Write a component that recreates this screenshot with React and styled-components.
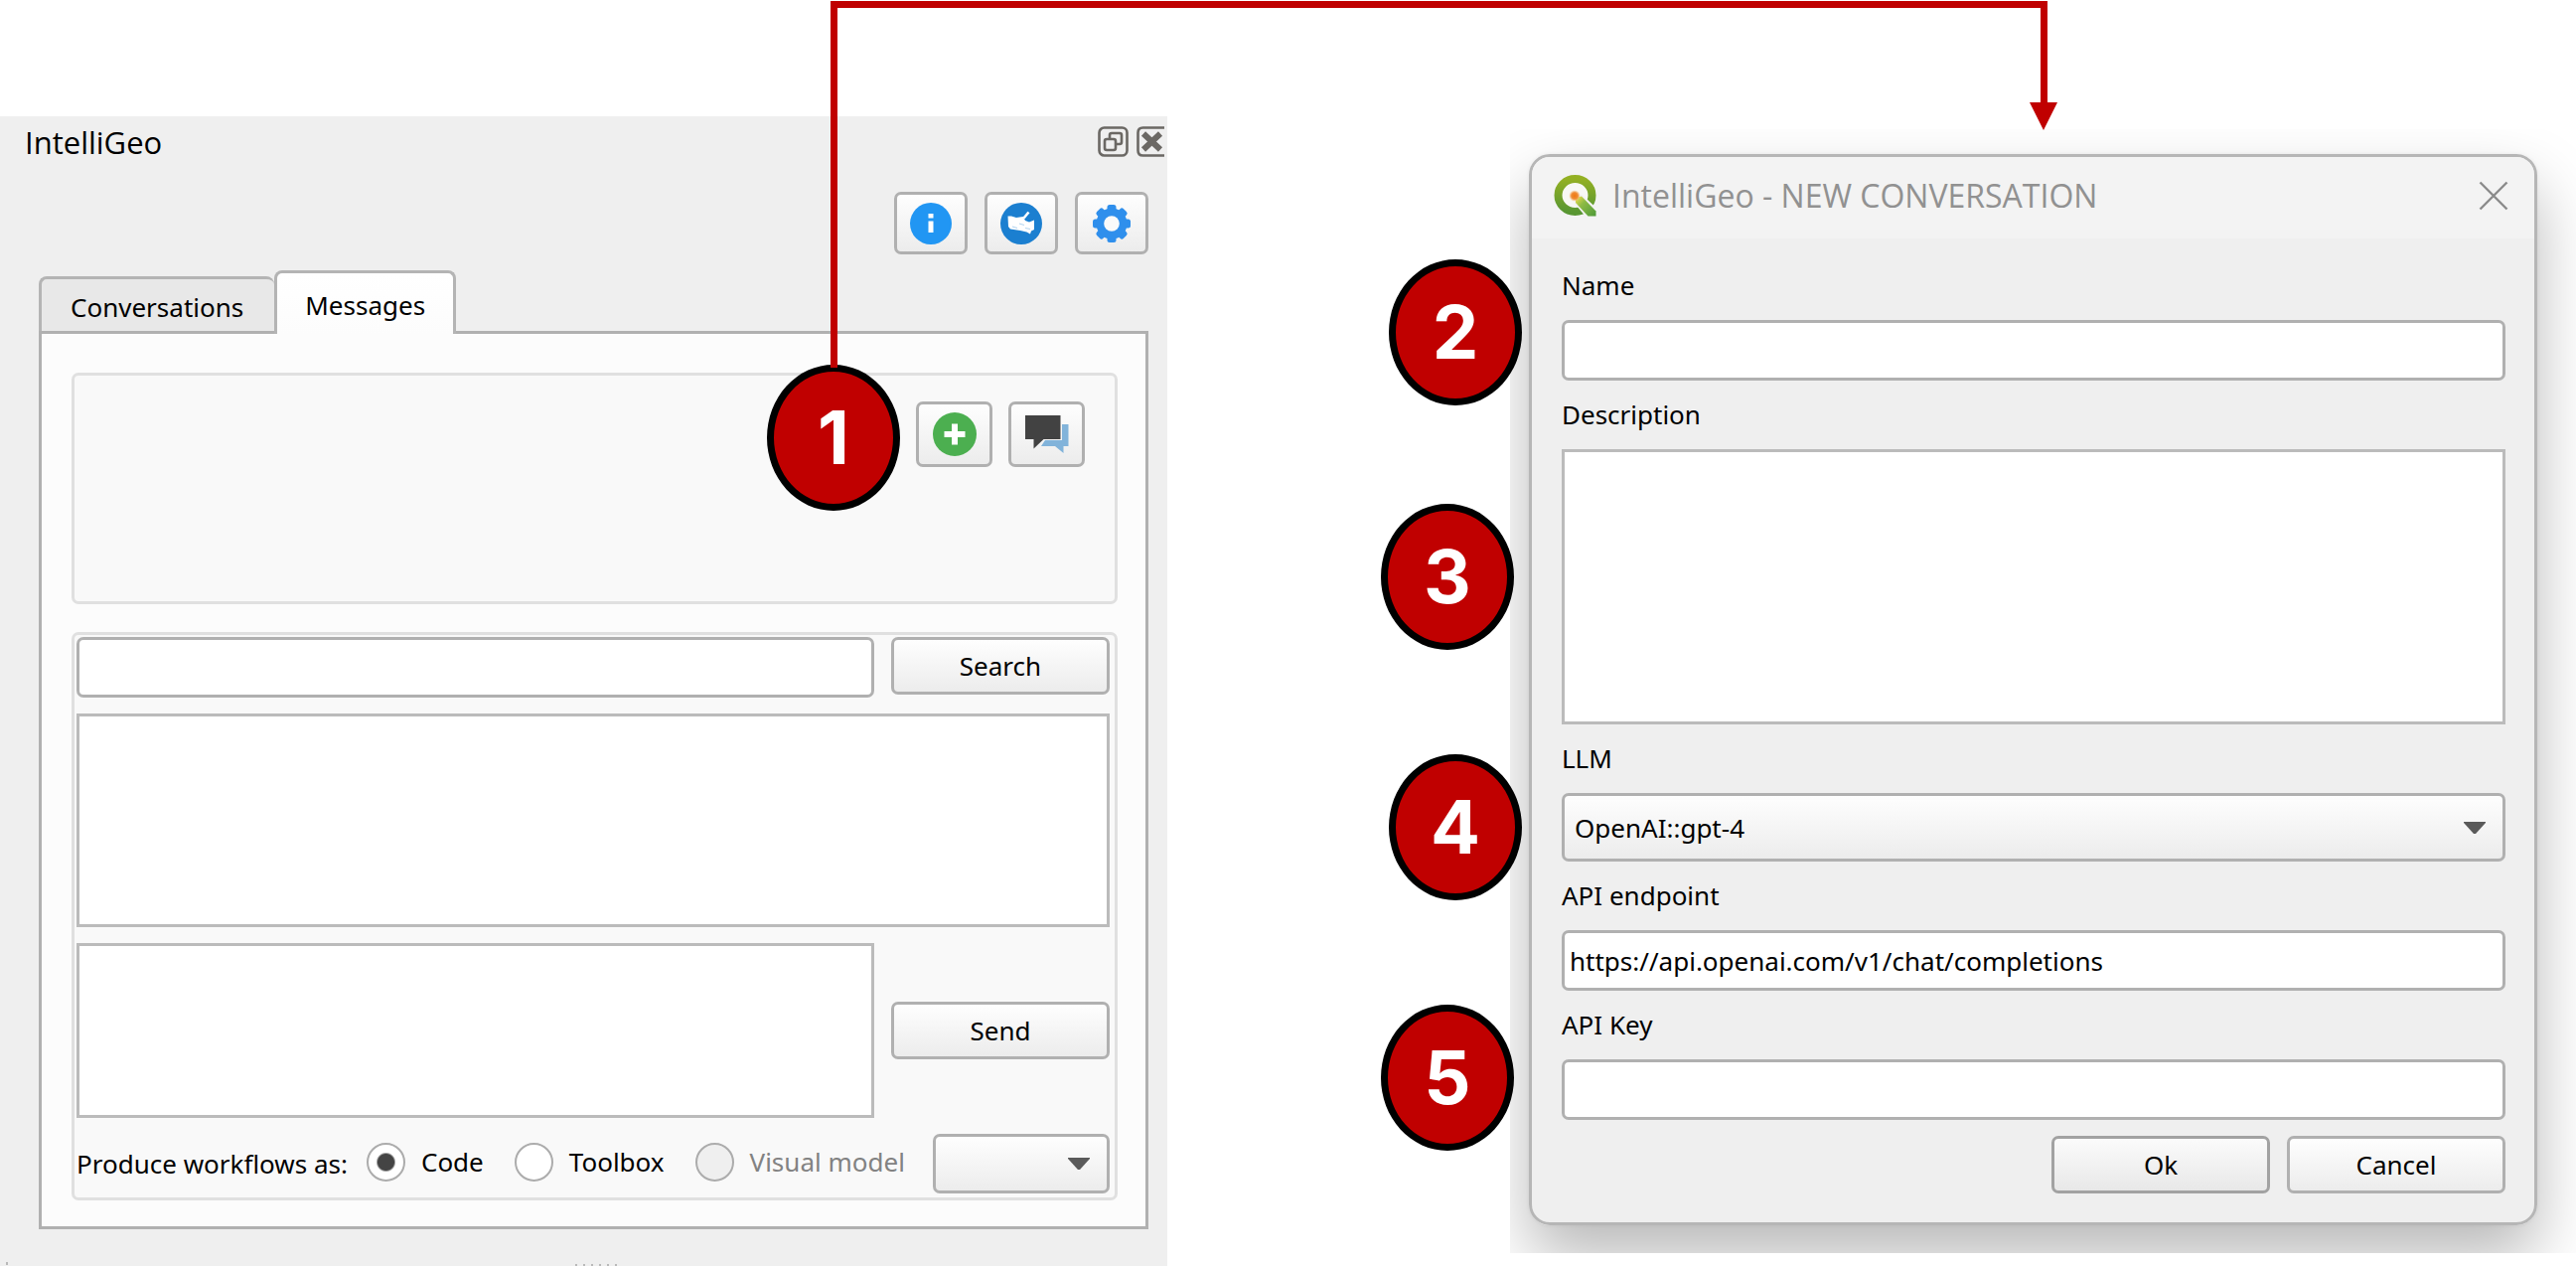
import React from "react";
import styled, { createGlobalStyle, css } from "styled-components";

const GlobalStyle = createGlobalStyle`
  *, *::before, *::after { box-sizing: border-box; }
  body { margin: 0; background: #ffffff; color: #000000; }
  body, button, input, select, textarea {
    font-family: "Noto Sans", "Open Sans", sans-serif;
    font-size: 26px;
  }
`;

const Page = styled.main`
  position: relative;
  display: grid;
  grid-template-columns: minmax(0, 1175fr) minmax(0, 345fr) minmax(0, 1073fr);
  align-items: start;
  min-height: 100vh;
  overflow: hidden;
`;

/* ---------- shared controls ---------- */

const raised = css`
  background: linear-gradient(#fefefe, #ececec);
  border: 3px solid #b0b0b0;
  border-radius: 7px;
  color: #000000;
`;

const PushButton = styled.button`
  ${raised}
  flex: none;
  width: 220px;
  height: 58px;
  padding: 0;
  ${(p) => p.$primary && css`
    background: linear-gradient(#fbfbfb, #e8e8e8);
    border-color: #a2a2a2;
  `}
`;

const IconButton = styled.button`
  ${raised}
  display: grid;
  place-items: center;
  width: ${(p) => (p.$large ? 77 : 74)}px;
  height: ${(p) => (p.$large ? 66 : 63)}px;
  padding: 0;
`;

const TextInput = styled.input`
  flex: 1;
  flex-basis: auto;
  min-width: 0;
  width: 100%;
  height: 61px;
  padding: 0 5px;
  background: #ffffff;
  border: 3px solid #b0b0b0;
  border-radius: 7px;
`;

const TextArea = styled.textarea`
  display: block;
  flex: 1;
  flex-basis: auto;
  min-width: 0;
  width: 100%;
  height: ${(p) => p.$height}px;
  padding: 5px;
  background: #ffffff;
  border: 3px solid #bbbbbb;
  border-radius: 0;
  resize: none;
`;

const SelectBox = styled.span`
  display: grid;
  align-items: center;
  width: ${(p) => p.$width || "100%"};
  > * { grid-area: 1 / 1; }
`;

const Select = styled.select`
  ${raised}
  appearance: none;
  width: 100%;
  height: ${(p) => p.$height}px;
  padding: 0 50px 0 10px;
`;

const SelectArrow = styled.svg`
  justify-self: end;
  margin-right: 20px;
  pointer-events: none;
`;

function DropDown({ height, width, children, ...rest }) {
  return (
    <SelectBox $width={width}>
      <Select $height={height} {...rest}>{children}</Select>
      <SelectArrow width="22" height="12" viewBox="0 0 22 12" aria-hidden="true">
        <path d="M0 0H22V1L12 12H10L0 1Z" fill="#5a5a5a" />
      </SelectArrow>
    </SelectBox>
  );
}

/* ---------- callouts ---------- */

const Callout = styled.span`
  position: absolute;
  z-index: 2;
  top: ${(p) => p.$top}px;
  left: ${(p) => p.$left}px;
  display: grid;
  place-items: center;
  width: 134px;
  height: 147px;
  padding-bottom: 2px;
  background: #c00000;
  border: 7px solid #000000;
  border-radius: 50%;
  color: #ffffff;
  font: 700 74px/1 Inter, "Liberation Sans", sans-serif;
`;

const Connector = styled.div`
  position: absolute;
  z-index: 3;
  top: 1px;
  left: calc(100% * 1175 / 2593 - 339px);
  right: calc(100% * 1073 / 2593 / 2 - 4px);
  height: 369px;
  border-top: 7px solid #c00000;
  border-left: 7px solid #c00000;
  pointer-events: none;
  &::before {
    content: "";
    position: absolute;
    top: 0;
    right: 0;
    width: 7px;
    height: 96px;
    background: #c00000;
  }
  &::after {
    content: "";
    position: absolute;
    top: 95px;
    right: -10px;
    border: solid transparent;
    border-width: 28px 14px 0;
    border-top-color: #c00000;
  }
`;

/* ---------- dock panel ---------- */

const Dock = styled.section`
  margin-top: 117px;
  min-height: calc(100vh - 117px);
  padding-top: 10px;
  background: #efefef;
`;

const DockTitleBar = styled.header`
  display: flex;
  align-items: center;
  gap: 8px;
  padding: 0 3px 0 25px;
`;

const DockTitle = styled.h1`
  flex: 1;
  margin: 0;
  font: 400 31px/30px "Open Sans", "Noto Sans", sans-serif;
`;

const BareButton = styled.button`
  display: block;
  padding: 0;
  border: 0;
  background: none;
  svg { display: block; }
`;

const Toolbar = styled.div`
  display: flex;
  justify-content: flex-end;
  gap: 17px;
  padding: 35px 19px 16px;
`;

const TabBar = styled.div`
  display: flex;
  align-items: flex-end;
  height: 61px;
  margin-left: 39px;
`;

const Tab = styled.button`
  height: 55px;
  padding: 4px 31px 0 29px;
  border: 3px solid #b4b4b4;
  border-width: 3px 0 0 3px;
  border-radius: 8px 8px 0 0;
  background: #e8e8e8;
  ${(p) => p.$active && css`
    position: relative;
    height: 64px;
    margin-bottom: -3px;
    border-width: 3px 3px 0;
    padding: 3px 28px 0;
    background: linear-gradient(#ffffff, #fcfcfc);
  `}
`;

const Pane = styled.div`
  display: flex;
  flex-direction: column;
  gap: 28px;
  margin: 0 19px 0 39px;
  padding: 39px 28px 26px 30px;
  border: 3px solid #b0b0b0;
  background: #fcfcfc;
`;

const Group = styled.div`
  border: 3px solid #e0e0e0;
  border-radius: 7px;
  background: #f9f9f9;
`;

const ActionsGroup = styled(Group)`
  display: flex;
  align-items: flex-start;
  justify-content: flex-end;
  min-height: 233px;
  padding: 26px 30px;
`;

const Actions = styled.div`
  position: relative;
  display: flex;
  gap: 16px;
`;

const ChatGroup = styled(Group)`
  display: flex;
  flex-direction: column;
  gap: 16px;
  padding: 2px 5px 4px 2px;
`;

const Row = styled.div`
  display: flex;
  align-items: ${(p) => p.$align || "center"};
  gap: 17px;
`;

const RadioSet = styled.div`
  display: flex;
  align-items: center;
  gap: 31px;
  padding: 0 0 4px 2px;
  white-space: nowrap;
`;

const RadioLabel = styled.label`
  display: flex;
  align-items: center;
  gap: 16px;
  line-height: 39px;
  color: ${(p) => (p.$disabled ? "#828282" : "#000000")};
`;

const Radio = styled.input`
  appearance: none;
  width: 39px;
  height: 39px;
  margin: 0;
  border: 2px solid #acacac;
  border-radius: 50%;
  background: #ffffff;
  &:checked { background: radial-gradient(circle, #444444 0 8px, #ffffff 10px); }
  &:disabled { background: #efefef; }
`;

const RowEnd = styled.div`
  margin-left: auto;
`;

const Splitter = styled.div`
  display: grid;
  grid-template-columns: 25px 1fr;
  align-items: end;
  justify-items: center;
  height: 38px;
`;

const SplitterGrip = styled.div`
  display: flex;
  gap: 6px;
`;

const SplitterDot = styled.i`
  width: 2px;
  height: 3px;
  background: #b9b9b9;
`;

const CornerDot = styled(SplitterDot)`
  justify-self: start;
  margin: 0 0 2px 6px;
`;

/* ---------- dialog ---------- */

const Stage = styled.section`
  position: relative;
  grid-column: 3;
  margin-top: 130px;
  padding: 25px 39px 28px 19px;
`;

const ShadowLayer = styled.div`
  position: absolute;
  inset: 0;
  padding: inherit;
  overflow: hidden;
  &::before {
    content: "";
    display: block;
    height: 100%;
    border-radius: 21px;
    box-shadow: 0 32px 64px rgba(0, 0, 0, 0.28), 0 0 4px rgba(0, 0, 0, 0.06);
  }
`;

const Dialog = styled.div`
  position: relative;
  border: 3px solid #b6b6b6;
  border-radius: 21px;
  background: #efefef;
`;

const DialogHeader = styled.header`
  display: flex;
  align-items: center;
  gap: 16px;
  height: 82px;
  padding: 0 26px 4px 22px;
  border-radius: 18px 18px 0 0;
  background: #f3f3f3;
`;

const DialogTitle = styled.h2`
  flex: 1;
  margin: 0;
  color: #919191;
  font: 400 32px/40px "Open Sans", "Noto Sans", sans-serif;
`;

const DialogBody = styled.form`
  display: flex;
  flex-direction: column;
  gap: 16px;
  padding: 29px 29px 29px 30px;
`;

const Field = styled.div`
  position: relative;
  display: flex;
  flex-direction: column;
  gap: 16px;
`;

const FieldLabel = styled.label`
  line-height: 37px;
`;

const DialogButtons = styled.div`
  display: flex;
  justify-content: flex-end;
  gap: 17px;
`;

/* ---------- icons ---------- */

const FloatIcon = () => (
  <svg width="31" height="31" viewBox="0 0 31 31" fill="none" stroke="#6b6864" strokeWidth="2.6" aria-hidden="true">
    <rect x="1.5" y="1.5" width="28" height="28" rx="5" />
    <rect x="7" y="13" width="11" height="11" rx="2" />
    <path d="M12 12V9Q12 7 14 7H22Q24 7 24 9V16Q24 18 22 18H19" />
  </svg>
);

const DockCloseIcon = () => (
  <svg width="28" height="31" viewBox="0 0 28 31" fill="none" stroke="#6b6864" aria-hidden="true">
    <path d="M28 1.5H6.5Q1.5 1.5 1.5 6.5V24.5Q1.5 29.5 6.5 29.5H28" strokeWidth="2.6" />
    <path d="M7 7.5L24 23.5M24 7.5L7 23.5" strokeWidth="6" />
  </svg>
);

const InfoIcon = () => (
  <svg width="42" height="42" viewBox="0 0 42 42" aria-hidden="true">
    <circle cx="21" cy="21" r="21" fill="#2196f3" />
    <rect x="18.5" y="11" width="5" height="4.5" fill="#fff" />
    <rect x="18.5" y="18.5" width="5" height="11.5" fill="#fff" />
  </svg>
);

const AssistIcon = () => (
  <svg width="42" height="42" viewBox="0 0 42 42" aria-hidden="true">
    <circle cx="21" cy="21" r="21" fill="#1b7fd0" />
    <path
      d="M7.5 13.5H11L16 15L23 14L25 18L29 19.5L34 17.5V27L31 28.5L30 31.5L26.500 29.500L20 28L10 26.500L8 24Z"
      fill="#fff"
    />
    <path d="M23.500 15.500L28.500 9.500" stroke="#fff" strokeWidth="2.600" fill="none" />
    <path d="M12 24L17 25.500M19 21L24 22.500M25 25.500L30 26.500" stroke="#b5d5f0" strokeWidth="1.200" fill="none" />
  </svg>
);

const GearIcon = () => (
  <svg width="40" height="40" viewBox="-20 -20 40 40" aria-hidden="true">
    <g fill="#2f8fec">
      {[0, 45, 90, 135].map((a) => (
        <rect key={a} x="-4.5" y="-19" width="9" height="38" rx="2.5" transform={`rotate(${a})`} />
      ))}
      <circle r="15.5" />
    </g>
    <circle r="7.8" fill="#fafafa" />
  </svg>
);

const AddIcon = () => (
  <svg width="44" height="44" viewBox="0 0 44 44" aria-hidden="true">
    <circle cx="22" cy="22" r="22" fill="#4caf50" />
    <path d="M22 11.5V32.5M11.5 22H32.5" stroke="#fff" strokeWidth="6" />
  </svg>
);

const ChatIcon = () => (
  <svg width="44" height="40" viewBox="0 0 44 40" aria-hidden="true">
    <path d="M37 10H43.5V32H38.5V39L30 32H16L20 26H37Z" fill="#81b3da" />
    <path d="M0 1H35.5V25H18.5L8.500 34.500V25H0Z" fill="#424242" />
  </svg>
);

const QgisIcon = () => (
  <svg width="43" height="42" viewBox="0 0 43 42" aria-hidden="true">
    <defs>
      <linearGradient id="qRing" x1="0" y1="0" x2="0" y2="1">
        <stop offset="0" stopColor="#93b023" />
        <stop offset="1" stopColor="#589632" />
      </linearGradient>
      <linearGradient id="qTail" x1="22" y1="22" x2="42" y2="41" gradientUnits="userSpaceOnUse">
        <stop offset="0" stopColor="#f5e04a" />
        <stop offset="0.35" stopColor="#8fbb45" />
        <stop offset="1" stopColor="#4f9a38" />
      </linearGradient>
      <radialGradient id="qSpot">
        <stop offset="0" stopColor="#ee7913" />
        <stop offset="0.6" stopColor="#f08c34" />
        <stop offset="1" stopColor="#f6c48a" stopOpacity="0.3" />
      </radialGradient>
    </defs>
    <ellipse cx="21.5" cy="20.5" rx="17" ry="16.5" fill="#f8f8f4" stroke="url(#qRing)" strokeWidth="8" />
    <path d="M22 22L28 20.500L43 35V41.500H33L22 28.500Z" fill="#f3f3f3" stroke="#f3f3f3" strokeWidth="2" />
    <path d="M22 23L28 21.500L42.500 36.500V41.500H34.500L22 28Z" fill="url(#qTail)" />
    <circle cx="21" cy="21" r="5.500" fill="url(#qSpot)" />
  </svg>
);

const CloseIcon = () => (
  <svg width="30" height="30" viewBox="0 0 30 30" fill="none" stroke="#8a8a8a" strokeWidth="2.400" aria-hidden="true">
    <path d="M1.500 1.500L28.500 28.500M28.500 1.500L1.500 28.500" />
  </svg>
);

/* ---------- screens ---------- */

function DockPanel() {
  return (
    <Dock>
      <DockTitleBar>
        <DockTitle>IntelliGeo</DockTitle>
        <BareButton aria-label="Float panel"><FloatIcon /></BareButton>
        <BareButton aria-label="Close panel"><DockCloseIcon /></BareButton>
      </DockTitleBar>

      <Toolbar>
        <IconButton aria-label="Information"><InfoIcon /></IconButton>
        <IconButton aria-label="Assistance"><AssistIcon /></IconButton>
        <IconButton aria-label="Settings"><GearIcon /></IconButton>
      </Toolbar>

      <TabBar role="tablist">
        <Tab role="tab" aria-selected="false">Conversations</Tab>
        <Tab role="tab" aria-selected="true" $active>Messages</Tab>
      </TabBar>

      <Pane role="tabpanel">
        <ActionsGroup>
          <Actions>
            <Callout $top={-37} $left={-150}>1</Callout>
            <IconButton $large aria-label="New conversation"><AddIcon /></IconButton>
            <IconButton $large aria-label="Show messages"><ChatIcon /></IconButton>
          </Actions>
        </ActionsGroup>

        <ChatGroup>
          <Row $align="flex-start">
            <TextInput type="text" aria-label="Search messages" />
            <PushButton>Search</PushButton>
          </Row>
          <TextArea $height={215} aria-label="Message history" readOnly />
          <Row>
            <TextArea $height={176} aria-label="Message" />
            <PushButton>Send</PushButton>
          </Row>
          <Row>
            <span id="output-kind">Produce workflows as:</span>
            <RadioSet role="radiogroup" aria-labelledby="output-kind">
              <RadioLabel><Radio type="radio" name="output" defaultChecked />Code</RadioLabel>
              <RadioLabel><Radio type="radio" name="output" />Toolbox</RadioLabel>
              <RadioLabel $disabled><Radio type="radio" name="output" disabled />Visual model</RadioLabel>
            </RadioSet>
            <RowEnd>
              <DropDown height={60} width="178px" aria-label="Output option" />
            </RowEnd>
          </Row>
        </ChatGroup>
      </Pane>

      <Splitter aria-hidden="true">
        <CornerDot />
        <SplitterGrip>
          {[0, 1, 2, 3, 4, 5].map((n) => <SplitterDot key={n} />)}
        </SplitterGrip>
      </Splitter>
    </Dock>
  );
}

function NewConversationDialog() {
  return (
    <Stage>
      <ShadowLayer />
      <Dialog role="dialog" aria-labelledby="dialog-title">
        <DialogHeader>
          <QgisIcon />
          <DialogTitle id="dialog-title">IntelliGeo - NEW CONVERSATION</DialogTitle>
          <BareButton aria-label="Close"><CloseIcon /></BareButton>
        </DialogHeader>
        <DialogBody onSubmit={(e) => e.preventDefault()}>
          <Field>
            <Callout $top={-8} $left={-174}>2</Callout>
            <FieldLabel htmlFor="name">Name</FieldLabel>
            <TextInput id="name" type="text" />
          </Field>
          <Field>
            <Callout $top={108} $left={-182}>3</Callout>
            <FieldLabel htmlFor="description">Description</FieldLabel>
            <TextArea id="description" $height={277} />
          </Field>
          <Field>
            <Callout $top={14} $left={-174}>4</Callout>
            <FieldLabel htmlFor="llm">LLM</FieldLabel>
            <DropDown id="llm" height={69}>
              <option>OpenAI::gpt-4</option>
            </DropDown>
          </Field>
          <Field>
            <FieldLabel htmlFor="endpoint">API endpoint</FieldLabel>
            <TextInput id="endpoint" type="text" defaultValue="https://api.openai.com/v1/chat/completions" />
          </Field>
          <Field>
            <Callout $top={-2} $left={-182}>5</Callout>
            <FieldLabel htmlFor="key">API Key</FieldLabel>
            <TextInput id="key" type="text" />
          </Field>
          <DialogButtons>
            <PushButton type="submit" $primary>Ok</PushButton>
            <PushButton type="button">Cancel</PushButton>
          </DialogButtons>
        </DialogBody>
      </Dialog>
    </Stage>
  );
}

export default function App() {
  return (
    <>
      <GlobalStyle />
      <Page>
        <Connector />
        <DockPanel />
        <NewConversationDialog />
      </Page>
    </>
  );
}
